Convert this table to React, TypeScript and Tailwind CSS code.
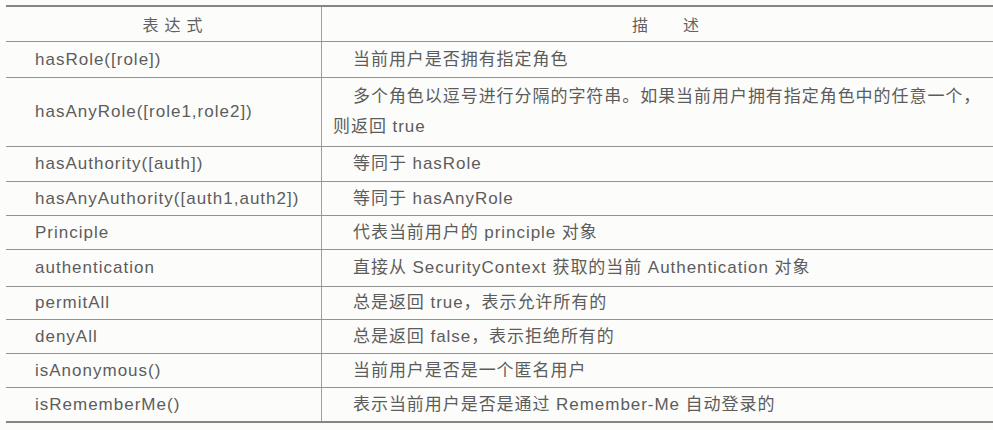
import React from "react";

const rows: { expr: string; desc: React.ReactNode; h: string }[] = [
  { expr: "hasRole([role])", desc: "当前用户是否拥有指定角色", h: "h-[36px]" },
  {
    expr: "hasAnyRole([role1,role2])",
    desc: (
      <>
        多个角色以逗号进行分隔的字符串。如果当前用户拥有指定角色中的任意一个，
        <br />
        则返回 true
      </>
    ),
    h: "h-[69px]",
  },
  { expr: "hasAuthority([auth])", desc: "等同于 hasRole", h: "h-[35px]" },
  { expr: "hasAnyAuthority([auth1,auth2])", desc: "等同于 hasAnyRole", h: "h-[34px]" },
  { expr: "Principle", desc: "代表当前用户的 principle 对象", h: "h-[34px]" },
  { expr: "authentication", desc: "直接从 SecurityContext 获取的当前 Authentication 对象", h: "h-[37px]" },
  { expr: "permitAll", desc: "总是返回 true，表示允许所有的", h: "h-[33px]" },
  { expr: "denyAll", desc: "总是返回 false，表示拒绝所有的", h: "h-[34px]" },
  { expr: "isAnonymous()", desc: "当前用户是否是一个匿名用户", h: "h-[34px]" },
  { expr: "isRememberMe()", desc: "表示当前用户是否是通过 Remember-Me 自动登录的", h: "h-[33px]" },
];

export default function App() {
  return (
    <div className="w-[993px] h-[430px] overflow-hidden bg-[#fcfcfb] pt-[5px] pl-[6px] font-['Liberation_Sans','Noto_Sans_CJK_SC',sans-serif] text-[#5c5c5c]">
      <div className="border-t-2 border-b-2 border-[#858585]">
        {/* header */}
        <div className="flex h-[35px] border-b border-[#939393]">
          <div className="w-[316px] border-r border-[#a0a0a0] flex items-center justify-center pt-[4px] pl-[24px] text-[16px] tracking-[6px] text-[#606060]">
            表达式
          </div>
          <div className="flex-1 flex items-center justify-center pt-[4px] pl-[16px] text-[16px] text-[#606060]">
            <span>描</span>
            <span className="ml-[35px]">述</span>
          </div>
        </div>
        {rows.map((r, i) => (
          <div
            key={r.expr}
            className={`flex ${r.h} ${i < rows.length - 1 ? "border-b border-[#939393]" : ""}`}
          >
            <div className="w-[316px] border-r border-[#a0a0a0] flex items-center pl-[29px] text-[17px] tracking-[1px] whitespace-nowrap">
              {r.expr}
            </div>
            <div className="flex-1 flex items-center pl-[11px] text-[17px] tracking-[0.95px] leading-[30px] whitespace-nowrap">
              <div className="indent-[20px]">{r.desc}</div>
            </div>
          </div>
        ))}
      </div>
    </div>
  );
}
